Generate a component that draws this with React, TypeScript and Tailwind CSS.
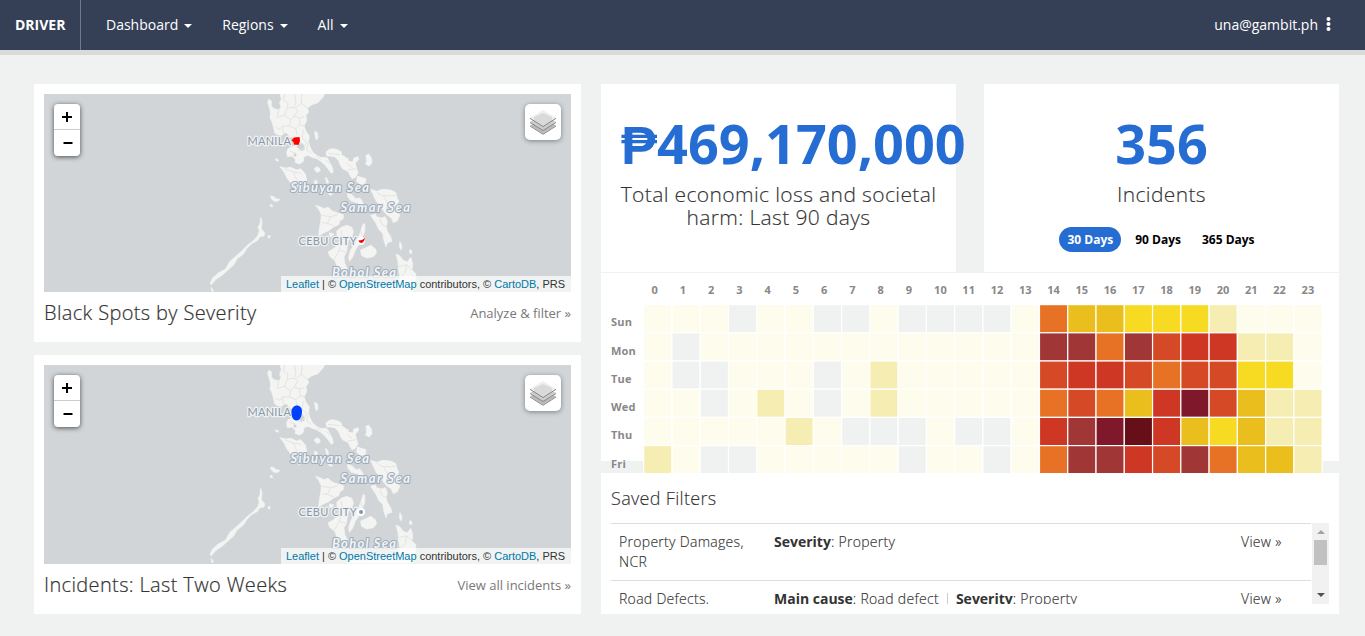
import React from "react";

const LAND = [
  // Luzon
  "M240 12L244 26 239 40 243 50 237 60 222 56 214 48 214 32 206 28 203 38 208 52 212 70 210 84 216 96 220 110 224 128 232 134 246 136 254 128 262 130 270 142 280 142 300 146 298 158 288 166 276 170 264 176 260 186 262 200 276 198 286 208 286 218 300 222 310 214 312 200 324 196 336 202 350 206 362 214 374 224 384 236 394 250 400 246 396 230 388 214 380 202 362 202 350 196 338 186 330 170 326 154 328 138 318 124 312 108 320 92 318 76 326 66 322 54 336 44 354 38 370 20 374 12Z",
  // Bicol
  "M378 186L388 178 400 176 414 180 424 186 426 200 436 206 448 214 458 216 462 204 474 200 476 208 466 220 470 236 474 248 466 262 456 266 450 256 444 244 430 238 422 228 416 212 404 200 390 198 380 198Z",
  "M498 196L506 192 514 204 516 218 508 228 496 222 500 214Z",
  "M344 124L352 128 354 142 350 150 346 142Z",
  "M420 196L432 198 440 206 446 218 436 216Z",
  "M342 238L350 230 358 234 361 242 352 248Z",
  "M438 206L444 204 444 214 440 216Z",
  "M472 258L484 262 498 266 496 280 482 284 470 274Z",
  // Mindoro
  "M240 230L258 234 272 232 290 240 302 236 316 252 320 270 312 290 304 306 298 312 288 300 276 282 262 266 252 246Z",
  "M212 318L222 320 228 326 240 328 234 334 222 334 214 326Z",
  "M210 344L216 344 218 350 212 350Z",
  "M380 304L390 306 398 314 390 316Z",
  "M376 262L382 266 386 278 380 280Z",
  "M344 270L352 274 350 284 344 284Z",
  // Masbate
  "M442 310L456 314 468 326 480 324 488 336 494 356 486 352 472 338 454 334 444 322Z",
  // Samar
  "M512 298L530 304 548 298 572 300 588 308 590 320 596 334 590 346 588 366 600 374 592 392 580 398 574 384 562 376 550 362 542 344 530 336 522 320Z",
  // Leyte
  "M512 376L526 372 530 380 544 384 556 380 562 396 558 410 562 424 572 440 576 454 562 458 558 470 552 452 548 430 536 418 528 400 520 388Z",
  // Panay
  "M346 346L360 350 372 356 384 352 396 362 410 368 430 374 430 386 420 392 416 404 402 410 386 422 372 428 356 438 358 416 362 396 364 374 356 358Z",
  // Negros
  "M410 424L424 412 440 406 456 412 460 426 456 440 446 450 442 468 440 486 432 500 434 520 442 536 424 538 410 526 404 510 390 500 384 486 398 478 414 466 418 450 412 440Z",
  // Cebu
  "M490 400L495 404 494 424 488 440 478 462 466 480 458 502 448 514 446 500 452 480 464 460 476 440 482 424Z",
  // Bohol
  "M482 480L496 474 512 466 526 476 530 488 520 500 500 504 484 496Z",
  "M388 428L402 432 394 440 388 438Z",
  // Mindanao
  "M588 492L600 498 608 510 622 516 632 502 638 520 636 540 648 552 644 580 632 606 440 606 452 596 476 592 500 600 520 588 546 594 570 584 596 580 600 562 596 540 594 514Z",
  "M600 455L606 468 604 480 598 470Z",
  "M630 478L636 484 634 492 628 488Z",
  // Palawan
  "M182 382L186 396 184 416 194 428 192 438 180 440 172 452 156 460 140 476 130 492 112 506 100 526 84 540 66 556 48 568 34 584 30 580 38 564 56 548 76 538 90 514 106 500 124 484 142 466 160 452 174 436 178 422 174 412 180 402Z",
  "M204 438L210 436 210 444 205 444Z",
  "M34 592L40 602 38 606 34 602Z",
  "M226 206L236 210 234 214 227 211Z",
];

const BORDERS =
  "M254 12L250 30 264 38 262 54 282 52 288 36 284 12M306 12L304 40 288 52 M304 40L322 54M262 54L254 76 232 82 236 60M254 76L272 90 268 108 248 108 240 118 226 112M272 90L282 78 298 84 300 104 288 116 268 108M298 84L312 80M282 52L294 62 282 78M300 104L312 108M288 116L290 134M248 108L250 130M310 120L306 144 320 158 310 176 294 182M326 154L320 180 334 190M270 184L288 190M350 198L362 208M376 210L392 222M384 190L420 194M440 220L456 232M444 240L468 236M254 236L280 246 304 250M280 246L290 270 312 288M530 306L544 316 574 318 590 314M552 320L562 338 560 360M540 386L546 404 560 410M366 376L392 380 414 374M392 380L382 400 366 398M382 400L402 408M424 420L426 446 448 442M426 446L418 480 440 488M418 480L404 506M482 424L488 438M596 530L620 524 636 540M620 524L616 548 600 562";

function MapCard({ title, link, kind }: { title: string; link: string; kind: "spots" | "incidents" }) {
  const spots = kind === "spots";
  return (
    <section className={`bg-white px-[10px] pt-[10px] flex flex-col ${spots ? "h-[258px]" : "h-[259px]"}`}>
      <div className={`relative overflow-hidden bg-[#d1d5d8] ${spots ? "h-[198px]" : "h-[199px]"}`}>
        <svg width="527" height="199" className="block">
          <g transform="translate(156 -4) scale(.33333)" strokeLinejoin="round">
            {LAND.map((d) => (
              <path key={d} d={d} fill="#f4f4f3" stroke="#f4f4f3" strokeWidth="2" />
            ))}
            <path d="M296 160L306 160 312 166 314 178 304 184 298 176 290 172Z" fill="#d1d5d8" />
            <path d="M280 192L288 190 290 198 282 200Z" fill="#d1d5d8" />
            <path d={BORDERS} fill="none" stroke="#dfe0e0" strokeWidth="2.5" />
            <circle cx="483" cy="453" r="12" fill="#fff" />
            {!spots && <circle cx="483" cy="453" r="6" fill="#8496a9" />}
          </g>
          <g
            fill="#8797a8"
            stroke="#f0f2f2"
            strokeWidth="2.5"
            strokeLinejoin="round"
            style={{ paintOrder: "stroke" }}
            className="font-['Lato',sans-serif] text-[11px]"
          >
            <text x="203.500" y="51" textLength="43.500">MANILA</text>
            <text x="254.500" y="151" textLength="58">CEBU CITY</text>
          </g>
          <g
            fill="#f1f4f6"
            stroke="#a0aebc"
            strokeWidth="2.2"
            strokeLinejoin="round"
            style={{ paintOrder: "stroke" }}
            className="font-['Lato',sans-serif] text-[13px] italic font-bold"
          >
            <text x="246.500" y="97.500" textLength="78.500">Sibuyan Sea</text>
            <text x="296.500" y="117.500" textLength="69.500">Samar Sea</text>
            <text x="288" y="182.500" textLength="64">Bohol Sea</text>
          </g>
          {spots ? (
            <g fill="#f00">
              <path d="M250 43.5L255.5 43 256 47 254.5 51 250 50.5 249.5 48 247.5 46.5Z" />
              <path d="M314.500 146.500L318 146 321 144 320 147 318 149 315.500 148.500Z" />
            </g>
          ) : (
            <path
              d="M253 40.500C256 40.500 258 43 258 46 258 49 257 55.500 252.500 55.500 248.500 55.500 247.500 51 247.500 47 247.500 43 250 40.500 253 40.500Z"
              fill="#0040ff"
            />
          )}
        </svg>
        <div className="absolute left-[10px] top-[10px] w-[26px] h-[52px] rounded-[4px] bg-white shadow-[0_1px_5px_rgba(0,0,0,0.65)]">
          <svg width="26" height="52" stroke="#000" strokeWidth="2" fill="none">
            <path d="M0 25.500H26" stroke="#ccc" strokeWidth="1" />
            <path d="M8 13H18M13 8V18M9.500 39H18.500" />
          </svg>
        </div>
        <div className="absolute right-[10px] top-[10px] size-9 rounded-[5px] bg-white shadow-[0_1px_5px_rgba(0,0,0,0.4)] flex items-center justify-center">
          <svg width="26" height="26" viewBox="0 0 26 26">
            <path d="M0 16.500L13 9 26 16.500 13 25Z" fill="#bbb" />
            <path d="M0 17L13 25.300 26 17" fill="none" stroke="#8b8b8b" />
            <path d="M0 13L13 5 26 13 13 21Z" fill="#ccc" />
            <path d="M0 13.500L13 21.500 26 13.500" fill="none" stroke="#8b8b8b" />
            <path d="M0 9L13 1 26 9 13 17.500Z" fill="#efefef" />
            <path d="M4 8L13 4 22 8 22 11.500 13 17 4 11.500Z" fill="#dadada" />
            <path d="M0 9.300L13 17.500 26 9.300" fill="none" stroke="#858585" />
          </svg>
        </div>
        <div className="absolute right-0 bottom-0 h-4 w-[290px] bg-white/70 pl-[5px] text-[11px] leading-4 tracking-[-0.01px] text-[#333] font-['Liberation_Sans',sans-serif] whitespace-nowrap">
          <span className="text-[#0078a8]">Leaflet</span> | © <span className="text-[#0078a8]">OpenStreetMap</span>{" "}
          contributors, © <span className="text-[#0078a8]">CartoDB</span>, PRS
        </div>
      </div>
      <div className="flex justify-between items-center h-[42px]">
        <h2 className="text-[20px] font-light tracking-[0.36px] text-[#333] [-webkit-text-stroke:0.2px_#333]">{title}</h2>
        <a className="pt-px text-[13px] text-[#777]">{link}</a>
      </div>
    </section>
  );
}

const COLORS: Record<string, string> = {
  ".": "#fefced",
  g: "#f0f2f1",
  p: "#f5edb1",
  y: "#f6db22",
  a: "#eabe1d",
  o: "#e77225",
  r: "#d54927",
  s: "#cf3725",
  m: "#a13636",
  w: "#7f182a",
  d: "#670f18",
};

const ROWS: [string, string][] = [
  ["Sun", "...g..gg.gggg.oaayyyp..."],
  ["Mon", ".g............mmomrsspp."],
  ["Tue", ".gg...g.p.....rssrorryy."],
  ["Wed", "..g.p.g.p.....oroaswrapp"],
  ["Thu", ".....p.ggg.gg.smwdsayapp"],
  ["Fri", "p.gg.....g..g.ommsrmoaap"],
];

const PITCH = 28.27;
const LABEL_Y = [53, 82, 110, 138, 166, 195];

function HeatMap() {
  return (
    <svg width="738" height="200" className="block text-[11px] font-bold" fill="#888">
      {ROWS[0][1].split("").map((_, c) => (
        <text key={c} x={50.4 + c * PITCH} y="21">
          {c}
        </text>
      ))}
      {ROWS.map(([day, cells], r) => (
        <g key={day}>
          {cells.split("").map((k, c) => (
            <rect
              key={c}
              x={42.7 + c * PITCH}
              y={31.6 + r * 28.2}
              width={PITCH}
              height="28.2"
              fill={COLORS[k]}
              stroke="#fff"
              strokeWidth="1.2"
            />
          ))}
          <text x="10" y={LABEL_Y[r]} letterSpacing="0.2">
            {day}
          </text>
        </g>
      ))}
    </svg>
  );
}

function NavItem({ label }: { label: string }) {
  return (
    <span className="flex items-center gap-[6px]">
      {label}
      <span className="mt-[3px] border-x-4 border-t-4 border-x-transparent border-t-white" />
    </span>
  );
}

function Filter({ name, children }: { name: React.ReactNode; children: React.ReactNode }) {
  return (
    <div className="flex h-[57px] shrink-0 border-t border-[#ddd] pt-2 text-[14px] leading-5 font-light tracking-[0.3px] text-[#333] [-webkit-text-stroke:0.15px_#333]">
      <div className="w-[155px] px-2">{name}</div>
      <div className="flex-1 pl-2">{children}</div>
      <div className="w-[78px] pl-2">View »</div>
    </div>
  );
}

function Field({ children }: { children: React.ReactNode }) {
  return <b className="font-bold tracking-normal [-webkit-text-stroke:0]">{children}</b>;
}

export default function App() {
  return (
    <div className="h-[636px] w-[1365px] overflow-hidden bg-[#f0f2f1] font-['Open_Sans',sans-serif]">
      <header className="flex h-[55px] items-stretch border-b-[5px] border-[#d9dad9] bg-[#354057] text-[14px] text-white">
        <div className="flex w-[81px] items-center border-r border-[#727a89] pb-[2px] pl-[15px] font-bold">DRIVER</div>
        <nav className="flex flex-1 items-center gap-[30px] pb-[2px] pl-[25px]">
          <NavItem label="Dashboard" />
          <NavItem label="Regions" />
          <NavItem label="All" />
        </nav>
        <div className="flex items-center gap-2 pb-[2px] pr-[34px]">
          una@gambit.ph
          <svg width="5" height="14" fill="#fff">
            <circle cx="2.500" cy="2" r="2" />
            <circle cx="2.500" cy="7" r="2" />
            <circle cx="2.500" cy="12" r="2" />
          </svg>
        </div>
      </header>
      <main className="flex gap-5 pl-[34px] pt-[29px]">
        <div className="flex w-[547px] flex-col gap-[13px]">
          <MapCard title="Black Spots by Severity" link="Analyze & filter »" kind="spots" />
          <MapCard title="Incidents: Last Two Weeks" link="View all incidents »" kind="incidents" />
        </div>
        <div className="flex w-[738px] flex-col">
          <div className="flex justify-between text-center">
            <section className="h-[188px] w-[355px] bg-white px-5 pt-[29px]">
              <div className="text-[54px] leading-[60px] font-bold whitespace-nowrap text-[#266dd3]">₱469,170,000</div>
              <p className="-mx-2 mt-[10px] text-[21px] leading-[23px] font-light tracking-[0.37px] text-[#333] [-webkit-text-stroke:0.15px_#333]">
                Total economic loss and societal
                <br />
                harm: Last 90 days
              </p>
            </section>
            <section className="h-[188px] w-[355px] bg-white px-5 pt-[29px]">
              <div className="text-[54px] leading-[60px] font-bold text-[#266dd3]">356</div>
              <p className="mt-[10px] text-[21px] leading-[23px] font-light tracking-[0.37px] text-[#333] [-webkit-text-stroke:0.15px_#333]">
                Incidents
              </p>
              <div className="mt-[21px] flex justify-center gap-[6px] pr-[2px] text-[12px] leading-[25px] font-bold text-black">
                <span className="rounded-full bg-[#266dd3] px-2 text-white">30 Days</span>
                <span className="px-2">90 Days</span>
                <span className="px-[7px]">365 Days</span>
              </div>
            </section>
          </div>
          <section className="mt-px h-[188px] bg-white">
            <HeatMap />
          </section>
          <section className="relative mt-3 flex h-[141px] flex-col bg-white px-[10px]">
            <h2 className="h-[50px] pt-[13px] text-[18px] leading-6 font-light tracking-[0.32px] text-[#333] [-webkit-text-stroke:0.15px_#333]">
              Saved Filters
            </h2>
            <div className="flex h-[81px]">
              <div className="flex w-[700px] flex-col overflow-hidden">
                <Filter name="Property Damages, NCR">
                  <Field>Severity</Field>: Property
                </Filter>
                <Filter name="Road Defects,">
                  <Field>Main cause</Field>: Road defect
                  <span className="mx-2 inline-block h-[11px] w-px bg-[#ccc]" />
                  <Field>Severity</Field>: Property
                </Filter>
              </div>
              <div className="ml-px flex w-[17px] flex-col items-center bg-[#f1f1f1]">
                <span className="mt-[7px] border-x-4 border-b-4 border-x-transparent border-b-[#a3a3a3]" />
                <span className="mt-[6px] h-[25px] w-[13px] bg-[#c1c1c1]" />
                <span className="mt-auto mb-[7px] border-x-4 border-t-4 border-x-transparent border-t-[#505050]" />
              </div>
            </div>
          </section>
        </div>
      </main>
    </div>
  );
}
